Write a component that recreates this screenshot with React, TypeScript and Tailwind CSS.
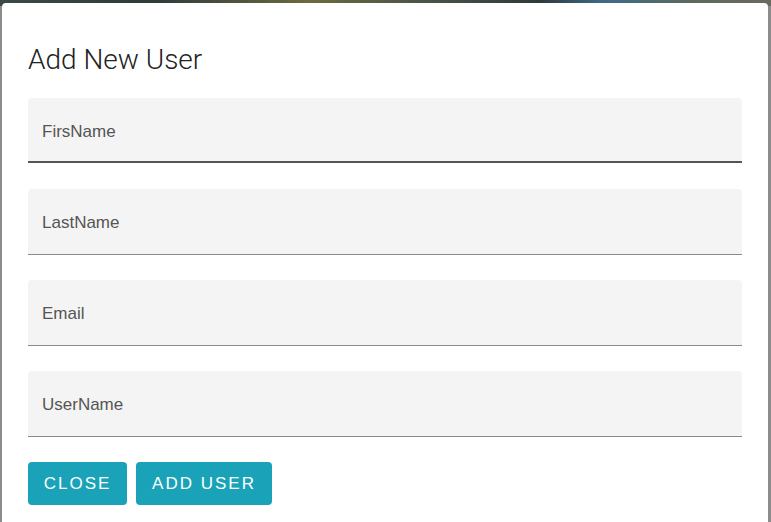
import React from 'react';

const fields = ['FirsName', 'LastName', 'Email', 'UserName'];

const App: React.FC = () => {
  return (
    <div className="relative h-[522px] w-[771px] overflow-hidden bg-[#8c8c8c]">
      {/* blurred photo behind the dialog */}
      <div className="absolute left-0 top-0 h-[6px] w-full bg-[linear-gradient(90deg,#3a4a48_0%,#2d3b3a_20%,#6c6a3e_40%,#4a5448_55%,#2e3a3a_70%,#3d6a8a_78%,#5c6a5a_90%,#6a6a60_100%)]" />
      <div className="relative ml-[2px] mr-[3px] mt-[3px] h-[519px] rounded-t-[4px] bg-white px-[26px] pt-[41px] font-['Liberation_Sans',Arial,sans-serif]">
        {/* 标题 */}
        <h2 className="font-['Roboto',sans-serif] text-[28px] font-light leading-[32px] text-[#222]">
          Add New User
        </h2>

        {/* 表单字段 */}
        <div className="mt-[22px] flex flex-col gap-[25px]">
          {fields.map((f, i) => (
            <div
              key={f}
              className={
                i === 0
                  ? 'mb-px flex h-[65px] items-center rounded-t-[4px] border-b-2 border-[#555] bg-[#f4f4f4] px-[14px] pt-[5px] text-[17px] text-[#555]'
                  : 'flex h-[66px] items-center rounded-t-[4px] border-b border-[#8a8a8a] bg-[#f4f4f4] px-[14px] pt-[3px] text-[17px] text-[#555]'
              }
            >
              {f}
            </div>
          ))}
        </div>

        {/* 操作按钮 */}
        <div className="mt-[25px] flex gap-[9px]">
          <button className="h-[43px] w-[99px] rounded-[4px] bg-[#1aa3b8] text-[17px] tracking-[2px] text-white">
            CLOSE
          </button>
          <button className="h-[43px] w-[136px] rounded-[4px] bg-[#1aa3b8] text-[17px] tracking-[2px] text-white">
            ADD USER
          </button>
        </div>
      </div>
    </div>
  );
};

export default App;
